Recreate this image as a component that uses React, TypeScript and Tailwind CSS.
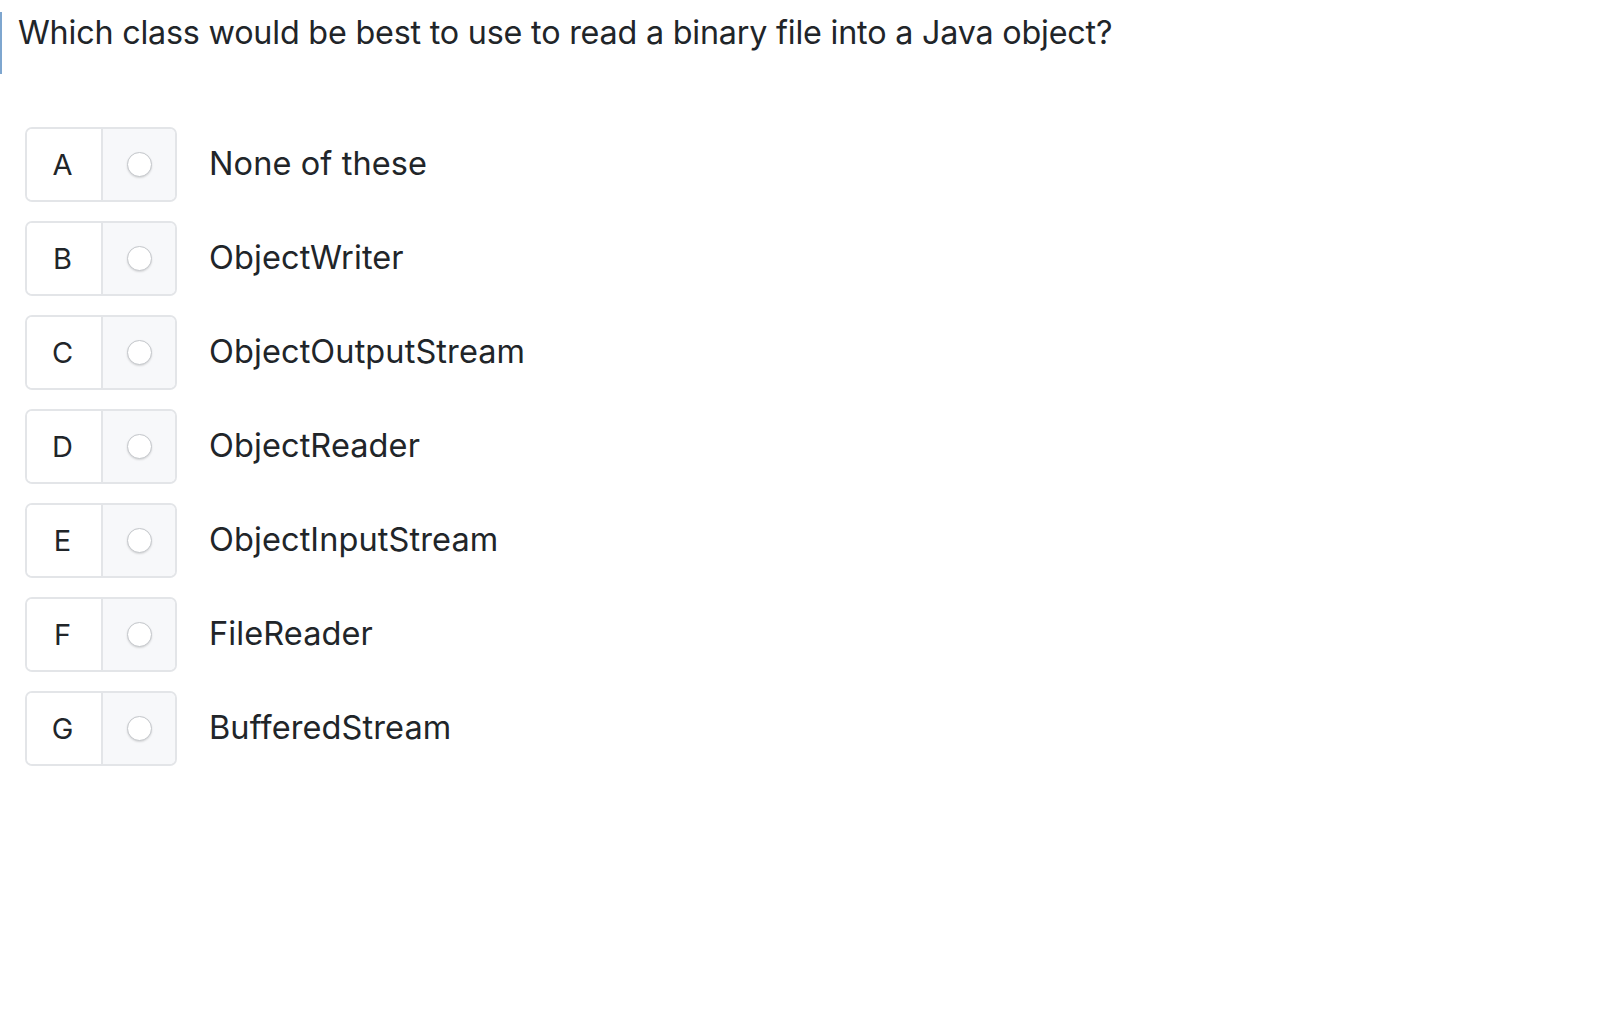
import React from 'react';

const options = [
    { key: 'A', label: 'None of these' },
    { key: 'B', label: 'ObjectWriter' },
    { key: 'C', label: 'ObjectOutputStream' },
    { key: 'D', label: 'ObjectReader' },
    { key: 'E', label: 'ObjectInputStream' },
    { key: 'F', label: 'FileReader' },
    { key: 'G', label: 'BufferedStream' },
];

export default function App() {
    return (
        <div className="min-h-[1030px] bg-white text-[#212529]" style={{ fontFamily: 'Inter, "Noto Sans", sans-serif' }}>
            <div className="pt-3">
                <div className="border-l-2 border-[#7ea6cf] pl-4 h-[62px]">
                    <h1 className="text-[32.3px] leading-[42px] font-normal tracking-[-0.2px]">
                        Which class would be best to use to read a binary file into a Java object?
                    </h1>
                </div>
            </div>
            <div className="flex flex-col gap-[19px] pl-[25px] pt-[53px]">
                {options.map(opt => (
                    <div key={opt.key} className="flex items-center">
                        <div className="flex w-[152px] h-[75px] border-2 border-[#e3e5e8] rounded-[7px] overflow-hidden">
                            <div className="w-[76px] flex items-center justify-center text-[29px] border-r-2 border-[#e3e5e8] bg-white">
                                <span className="-ml-[3px]">{opt.key}</span>
                            </div>
                            <div className="flex-1 flex items-center justify-center bg-[#f7f8fa]">
                                <span className="w-[25px] h-[25px] rounded-full bg-white border border-[#c4c7cb] shadow-[0_1px_2px_rgba(0,0,0,0.14)]" />
                            </div>
                        </div>
                        <span className="ml-[32px] text-[32.5px] leading-none tracking-[0.1px]">{opt.label}</span>
                    </div>
                ))}
            </div>
        </div>
    );
}
